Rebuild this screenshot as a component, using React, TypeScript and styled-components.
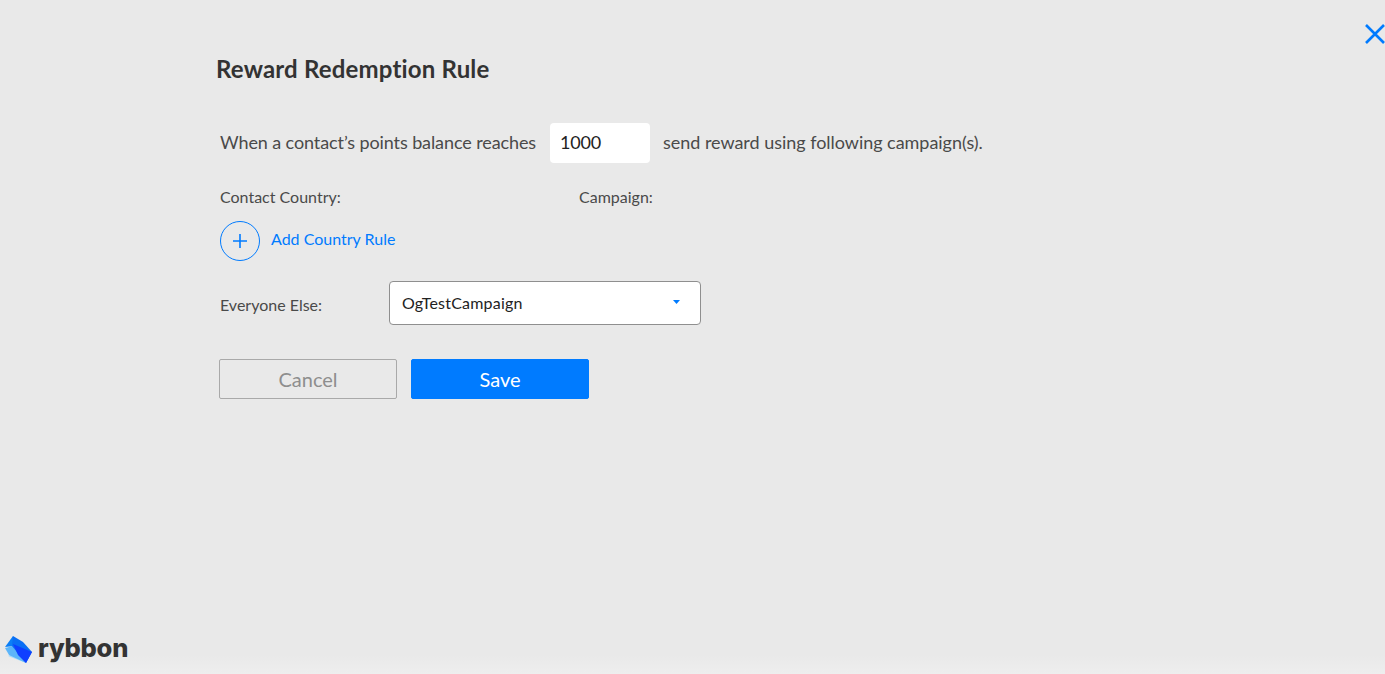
import styled, { createGlobalStyle } from 'styled-components';

const GlobalStyle = createGlobalStyle`
    html, body {
        margin: 0;
        padding: 0;
        height: 100%;
        overflow: hidden;
    }
    body {
        font-family: Lato, "Liberation Sans", sans-serif;
        background: #e9e9e9;
    }
`;

const Page = styled.div`
    position: relative;
    display: flex;
    flex-direction: column;
    height: 674px;
    box-sizing: border-box;
    padding: 54px 0 0 216px;
    overflow: hidden;
    background: linear-gradient(to bottom, #e9e9e9 0, #e9e9e9 655px, #eeeeee 674px);
`;

const CloseButton = styled.button`
    position: absolute;
    top: 23px;
    right: -1px;
    width: 22px;
    height: 22px;
    padding: 0;
    border: 0;
    background: none;
    cursor: pointer;
    svg { display: block; }
`;

const Title = styled.h1`
    margin: 0;
    font-size: 24px;
    line-height: 29px;
    font-weight: 700;
    letter-spacing: 0.18px;
    color: #333333;
`;

const Form = styled.div`
    display: flex;
    flex-direction: column;
    padding: 40px 0 0 3px;
`;

const BalanceRow = styled.div`
    display: flex;
    align-items: center;
    font-size: 18px;
    color: #4a4a4a;
`;

const BalanceText = styled.span<{ $tight?: boolean }>`
    padding-bottom: 2px;
    padding-left: ${props => (props.$tight ? '1px' : '0')};
    letter-spacing: ${props => (props.$tight ? '-0.1px' : '-0.03px')};
`;

const PointsInput = styled.input`
    width: 100px;
    height: 40px;
    box-sizing: border-box;
    margin: 0 13px 0 14px;
    padding: 0 10px 2px;
    border: 0;
    border-radius: 4px;
    background: #ffffff;
    font: inherit;
    letter-spacing: -0.2px;
    color: #222222;
    outline: none;
`;

const ColumnHeads = styled.div`
    display: grid;
    grid-template-columns: 359px auto;
    justify-content: start;
    margin-top: 25px;
    padding-left: 1px;
    font-size: 16px;
    line-height: 18px;
    color: #4a4a4a;
`;

const AddRule = styled.button`
    display: flex;
    align-items: center;
    gap: 11px;
    align-self: flex-start;
    margin: 15px 0 0 1px;
    padding: 0;
    border: 0;
    background: none;
    font: inherit;
    font-size: 16px;
    color: #007bff;
    cursor: pointer;
`;

const RuleLabel = styled.span`
    padding-bottom: 6px;
`;

const PlusCircle = styled.span`
    display: flex;
    align-items: center;
    justify-content: center;
    width: 40px;
    height: 40px;
    box-sizing: border-box;
    border: 1px solid #007bff;
    border-radius: 50%;
`;

const ElseRow = styled.div`
    display: flex;
    align-items: center;
    margin-top: 20px;
    font-size: 16px;
    color: #4a4a4a;
`;

const ElseLabel = styled.span`
    width: 169px;
    margin-left: 1px;
    padding-top: 2px;
`;

const CampaignSelect = styled.div`
    display: flex;
    align-items: center;
    justify-content: space-between;
    width: 312px;
    height: 44px;
    box-sizing: border-box;
    padding: 0 20px 2px 12px;
    border: 1px solid #8f8f8f;
    border-radius: 4px;
    background: #ffffff;
    font-size: 16px;
    letter-spacing: 0.2px;
    color: #222222;
    svg { display: block; }
`;

const Actions = styled.div`
    display: flex;
    gap: 14px;
    margin-top: 34px;
`;

const ActionButton = styled.button<{ $primary?: boolean }>`
    width: 178px;
    height: 40px;
    box-sizing: border-box;
    border: 1px solid ${props => (props.$primary ? '#007bff' : '#a9a9a9')};
    border-radius: 2px;
    background: ${props => (props.$primary ? '#007bff' : 'transparent')};
    color: ${props => (props.$primary ? '#ffffff' : '#8e8e8e')};
    font: inherit;
    font-size: 20px;
    cursor: pointer;
`;

const Footer = styled.div`
    position: absolute;
    left: 4px;
    bottom: 9px;
    display: flex;
    align-items: center;
    gap: 4px;
`;

const Wordmark = styled.span`
    padding-bottom: 2px;
    font-family: Inter, Lato, sans-serif;
    font-size: 25.5px;
    line-height: 30px;
    font-weight: 800;
    letter-spacing: -0.2px;
    color: #333333;
`;

const Logo = () => (
    <svg width="30" height="30" viewBox="0 0 30 30">
        <path d="M4 22 L12 18 L22 29 Z" fill="#a9dcfb" />
        <path d="M1 14 L9 12 L22 29 L5 21 Z" fill="#5cb5fa" />
        <path d="M9 2 L10 12 L1 13 Z" fill="#0b7ff7" />
        <path d="M9 2 L19 8 L28 18 L22 29 L8 12 Z" fill="#0a6ef5" />
        <path d="M9 10 L28 18 L22 29 L14 21 Z" fill="#0f3fff" />
    </svg>
);

const App = () => (
    <>
        <GlobalStyle />
        <Page>
            <CloseButton aria-label="Close">
                <svg width="22" height="22" viewBox="0 0 22 22">
                    <path d="M2 2 L20 20 M20 2 L2 20" stroke="#007bff" strokeWidth="2.6" fill="none" />
                </svg>
            </CloseButton>
            <Title>Reward Redemption Rule</Title>
            <Form>
                <BalanceRow>
                    <BalanceText $tight>When a contact’s points balance reaches</BalanceText>
                    <PointsInput defaultValue="1000" />
                    <BalanceText>send reward using following campaign(s).</BalanceText>
                </BalanceRow>
                <ColumnHeads>
                    <span>Contact Country:</span>
                    <span>Campaign:</span>
                </ColumnHeads>
                <AddRule>
                    <PlusCircle>
                        <svg width="16" height="16" viewBox="0 0 16 16">
                            <path d="M8 1 V15 M1 8 H15" stroke="#007bff" strokeWidth="1.6" fill="none" />
                        </svg>
                    </PlusCircle>
                    <RuleLabel>Add Country Rule</RuleLabel>
                </AddRule>
                <ElseRow>
                    <ElseLabel>Everyone Else:</ElseLabel>
                    <CampaignSelect>
                        OgTestCampaign
                        <svg width="7" height="4" viewBox="0 0 7 4">
                            <path d="M0 0 H7 L3.5 4 Z" fill="#007bff" />
                        </svg>
                    </CampaignSelect>
                </ElseRow>
                <Actions>
                    <ActionButton>Cancel</ActionButton>
                    <ActionButton $primary>Save</ActionButton>
                </Actions>
            </Form>
            <Footer>
                <Logo />
                <Wordmark>rybbon</Wordmark>
            </Footer>
        </Page>
    </>
);

export default App;
